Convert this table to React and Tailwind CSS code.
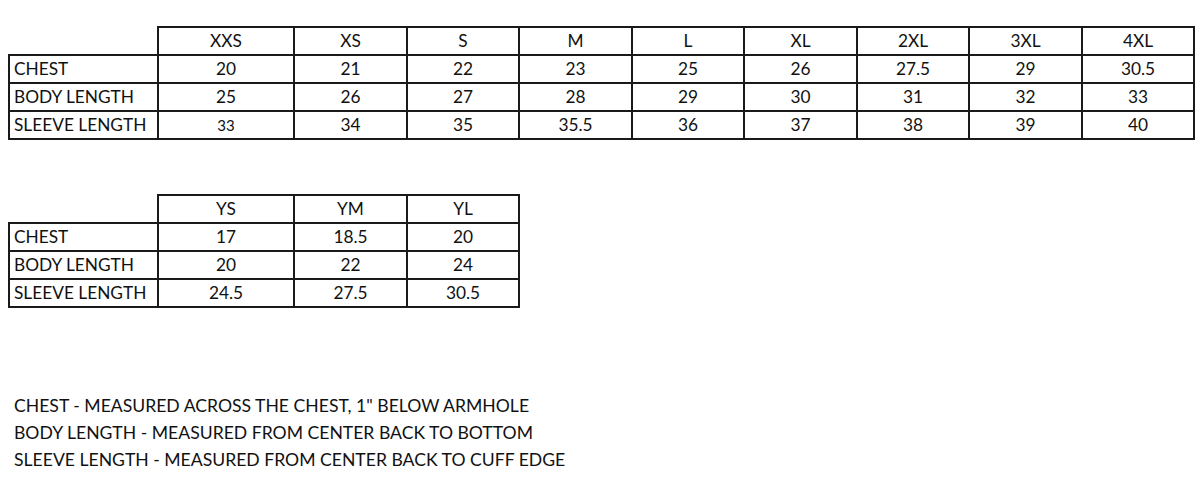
// Tableau des tailles — adultes, jeunes, et notes de mesure

const TAILLES_ADULTE = ['XXS', 'XS', 'S', 'M', 'L', 'XL', '2XL', '3XL', '4XL']
const MESURES_ADULTE = [
  { label: 'CHEST',         valeurs: ['20', '21', '22', '23', '25', '26', '27.5', '29', '30.5'] },
  { label: 'BODY LENGTH',   valeurs: ['25', '26', '27', '28', '29', '30', '31', '32', '33'] },
  { label: 'SLEEVE LENGTH', valeurs: ['33', '34', '35', '35.5', '36', '37', '38', '39', '40'] },
]

const TAILLES_JEUNE = ['YS', 'YM', 'YL']
const MESURES_JEUNE = [
  { label: 'CHEST',         valeurs: ['17', '18.5', '20'] },
  { label: 'BODY LENGTH',   valeurs: ['20', '22', '24'] },
  { label: 'SLEEVE LENGTH', valeurs: ['24.5', '27.5', '30.5'] },
]

// largeurs de colonnes mesurées sur l'image
const LARGEURS = [149, 136, 113, 112, 113, 112, 113, 112, 113, 112]

const cellule = 'border-2 border-[#1a1a1a] h-[28px] p-0 align-middle'

function TableTailles({ tailles, mesures }) {
  return (
    <table className="border-collapse table-fixed text-[17.3px] leading-none text-[#111]">
      <colgroup>
        {LARGEURS.slice(0, tailles.length + 1).map((w, i) => (
          <col key={i} style={{ width: w }} />
        ))}
      </colgroup>
      <thead>
        <tr>
          <th className="border-0 h-[28px] p-0" />
          {tailles.map(t => (
            <th key={t} className={`${cellule} font-normal text-center`}>{t}</th>
          ))}
        </tr>
      </thead>
      <tbody>
        {mesures.map(({ label, valeurs }) => (
          <tr key={label}>
            <td className={`${cellule} text-left pl-[4px] whitespace-nowrap`}>{label}</td>
            {valeurs.map((v, i) => (
              <td
                key={i}
                className={`${cellule} text-center ${
                  label === 'SLEEVE LENGTH' && tailles[i] === 'XXS' ? 'text-[15px]' : ''
                }`}
              >
                {v}
              </td>
            ))}
          </tr>
        ))}
      </tbody>
    </table>
  )
}

export default function App() {
  return (
    <div
      className="w-[1200px] h-[479px] bg-white overflow-hidden pl-[8px] pt-[26px]"
      style={{ fontFamily: 'Lato, "Open Sans", sans-serif' }}
    >
      <TableTailles tailles={TAILLES_ADULTE} mesures={MESURES_ADULTE} />

      <div className="mt-[54px]">
        <TableTailles tailles={TAILLES_JEUNE} mesures={MESURES_JEUNE} />
      </div>

      {/* Notes de mesure */}
      <div className="mt-[84px] pl-[6px] text-[17.6px] leading-[27px] text-[#111]">
        <p>CHEST - MEASURED ACROSS THE CHEST, 1" BELOW ARMHOLE</p>
        <p>BODY LENGTH - MEASURED FROM CENTER BACK TO BOTTOM</p>
        <p>SLEEVE LENGTH - MEASURED FROM CENTER BACK TO CUFF EDGE</p>
      </div>
    </div>
  )
}
